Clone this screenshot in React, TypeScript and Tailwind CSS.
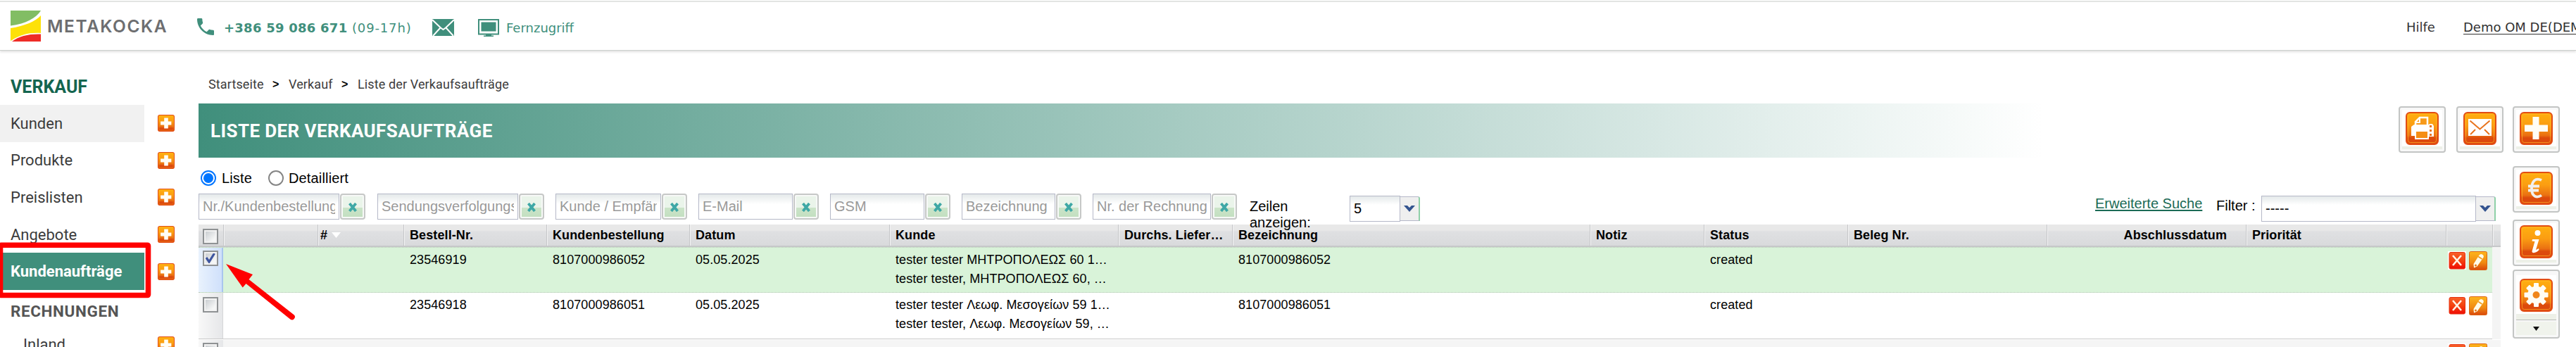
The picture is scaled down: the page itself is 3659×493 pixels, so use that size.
import React from "react";

const GRID =
  "grid grid-cols-[35px_134px_122px_203px_203px_284px_325px_162px_508px_162px_204px_283px_283px_284px_66px_12px]";

function Tile({ size, id, children }: { size: number; id: string; children: React.ReactNode }) {
  return (
    <svg width={size} height={size} viewBox="0 0 47 47" className="block shrink-0">
      <defs>
        <linearGradient id={id} x1="0" y1="0" x2="0" y2="1">
          <stop offset="0" stopColor="#ffb00f" />
          <stop offset="0.4" stopColor="#fb9d12" />
          <stop offset="0.72" stopColor="#ea7012" />
          <stop offset="0.8" stopColor="#dc4a0c" />
          <stop offset="1" stopColor="#dd4a0e" />
        </linearGradient>
      </defs>
      <rect x="1" y="1" width="45" height="45" rx="5" fill={`url(#${id})`} stroke="#e24d15" strokeWidth="2" />
      <rect x="3.5" y="3.5" width="40" height="40" rx="3" fill="none" stroke="#ffb52a" strokeOpacity="0.65" />
      {children}
    </svg>
  );
}

function ToolButton({ children }: { children: React.ReactNode }) {
  return (
    <div className="flex h-[66px] w-[67px] shrink-0 flex-col rounded-[4px] border-2 border-[#c3c5c4] bg-[#f8f8f8] p-[3px]">
      <div className="flex flex-1 justify-center bg-white pt-[3px]">{children}</div>
      <div className="h-[4px] bg-[#edf0e8]" />
    </div>
  );
}

function PlusGlyph() {
  return <path d="M18.500 7h9v11.500H40v9.500H27.500V39h-9V28H7v-9.500h11.500z" fill="#fffdf5" />;
}

function MenuItem({ label, id, hovered, active }: { label: string; id: string; hovered?: boolean; active?: boolean }) {
  const tone = active ? "bg-[#408f7c] font-bold text-white" : hovered ? "bg-[#f1f1f1] text-[#3c3c3c]" : "text-[#3c3c3c]";
  return (
    <div className="flex h-[52.6px] shrink-0 items-center">
      <div className={`flex h-full w-[205px] items-center pl-[15px] text-[22px] ${tone}`}>{label}</div>
      <div className="ml-[19px]">
        <Tile size={24} id={id}>
          <path d="M18 9h11v9.500H38v10H29V38H18v-9.500H8v-10h10z" fill="#fffdf5" />
        </Tile>
      </div>
    </div>
  );
}

function SearchField({ label, width, gap }: { label: string; width: string; gap: string }) {
  return (
    <div className={`flex h-[37px] shrink-0 ${gap}`}>
      <div
        className={`h-full overflow-hidden whitespace-nowrap border border-[#b5b8c8] bg-[linear-gradient(#e4e9ea,#ffffff_14px)] px-[5px] text-[20px] leading-[35px] text-[#999999] ${width}`}
      >
        <div className="overflow-hidden">{label}</div>
      </div>
      <div className="ml-px flex h-full w-[36px] items-center justify-center rounded-[4px] border-2 border-[#c6c8c7] bg-[#f7f9f7] p-[2px]">
        <div className="flex h-full w-full items-center justify-center bg-[linear-gradient(#eaf4ea_55%,#cbe4c8_56%,#c3dfc1)] pt-[2px]">
          <svg width="14" height="13" viewBox="0 0 14 13">
            <path d="M2.500 1l9 11M11.500 1l-9 11" stroke="#3fa8a6" strokeWidth="3.800" />
          </svg>
        </div>
      </div>
    </div>
  );
}

function Select({ value, width, trigger }: { value: string; width: string; trigger: string }) {
  return (
    <div className="mt-[3px] flex h-[37px] shrink-0">
      <div className={`h-full border border-[#b5b8c8] bg-[linear-gradient(#e4e9ea,#ffffff_12px)] pl-[5px] text-[20px] leading-[35px] text-black ${width}`}>
        {value}
      </div>
      <div
        className={`mt-px flex h-[35px] items-center justify-center rounded-tr-[3px] border-t border-b border-r-2 border-[#b5b8c8] border-r-[#8fd0a8] bg-[#efefef] ${trigger}`}
      >
        <svg width="16" height="9" viewBox="0 0 16 9">
          <path d="M0 0h5l3 3 3-3h5L8 9z" fill="#33538f" />
        </svg>
      </div>
    </div>
  );
}

function Check({ checked }: { checked?: boolean }) {
  return (
    <div className="flex h-[22px] w-[22px] items-center justify-center border-2 border-[#8f9294] bg-[linear-gradient(135deg,#c2c6ca,#f6f7f7_75%)] outline-2 -outline-offset-4 outline-[#f2f2f2]">
      {checked && (
        <svg width="16" height="16" viewBox="0 0 16 16" className="overflow-visible">
          <path d="M2 7l4 6L13.500 1" fill="none" stroke="#3f569f" strokeWidth="3.200" />
        </svg>
      )}
    </div>
  );
}

const HEADS = ["", "#", "Bestell-Nr.", "Kundenbestellung", "Datum", "Kunde", "Durchs. Liefer…", "Bezeichnung", "Notiz", "Status", "Beleg Nr.", "Abschlussdatum", "Priorität", "", ""];

function HeadCell({ label }: { label: string }) {
  const sort = label === "#";
  const right = label === "Abschlussdatum";
  const pad = right ? "justify-end pr-[27px]" : sort ? "pl-[3px]" : "pl-[8px]";
  return (
    <div className={`flex items-center border-l border-[#c5c6c8] shadow-[inset_1px_0_0_#f3f3f4] ${pad}`}>
      {label}
      {sort && (
        <svg width="13" height="8" viewBox="0 0 13 8" className="ml-[6px]">
          <path d="M0 0h13L6.500 8z" fill="#fff" />
        </svg>
      )}
    </div>
  );
}

function RowActions({ id }: { id: string }) {
  return (
    <div className="flex items-start gap-[4px] pl-[3px] pt-[5px]">
      <svg width="26" height="26" viewBox="0 0 26 26" className="block">
        <defs>
          <linearGradient id={`${id}r`} x1="0" y1="0" x2="0" y2="1">
            <stop offset="0" stopColor="#f8602a" />
            <stop offset="0.5" stopColor="#f4420e" />
            <stop offset="1" stopColor="#f00c05" />
          </linearGradient>
        </defs>
        <rect width="26" height="26" fill="#fff" />
        <rect x="2" y="1.500" width="22.500" height="23.500" rx="2" fill={`url(#${id}r)`} stroke="#e5300f" />
        <path d="M7 6l12 14M19 6L7 20" stroke="#fff3e6" strokeWidth="2.600" />
      </svg>
      <svg width="26" height="27" viewBox="0 0 26 27" className="block">
        <defs>
          <linearGradient id={`${id}p`} x1="0" y1="0" x2="0" y2="1">
            <stop offset="0" stopColor="#fdb51c" />
            <stop offset="0.6" stopColor="#f08a12" />
            <stop offset="1" stopColor="#d9480c" />
          </linearGradient>
        </defs>
        <rect x="0.500" y="0.500" width="25" height="26" rx="2" fill={`url(#${id}p)`} stroke="#dd6414" />
        <path d="M14.500 5.500a3.200 3.200 0 0 1 5.500 4L11.500 21.500 7 23.500l-.500-5.500z" fill="#fffbe8" />
        <path d="M13.200 7.500l5.300 3.500" stroke="#ef9a1c" strokeWidth="1.600" />
        <circle cx="9.500" cy="20" r="1.500" fill="#e57716" />
      </svg>
    </div>
  );
}

type Order = { nr: string; order: string; lines: [string, string] };

const ORDERS: Order[] = [
  { nr: "23546919", order: "8107000986052", lines: ["tester tester ΜΗΤΡΟΠΟΛΕΩΣ 60 1…", "tester tester, ΜΗΤΡΟΠΟΛΕΩΣ 60, …"] },
  { nr: "23546918", order: "8107000986051", lines: ["tester tester Λεωφ. Μεσογείων 59 1…", "tester tester, Λεωφ. Μεσογείων 59, …"] },
];

function OrderRow({ order, selected }: { order: Order; selected?: boolean }) {
  const row = selected ? "h-[65px] border-y border-dotted border-[#b9c9b9] bg-[#d9f3d9]" : "h-[66px] border-b-[1px] border-[#c9c9c9] bg-white";
  const check = selected
    ? "bg-[linear-gradient(90deg,#e9f2fd,#cfe0fb)] border-r-2 border-[#a9c5ee]"
    : "bg-[linear-gradient(90deg,#f8f8f8,#e6e7e9)] border-r border-[#d5d6d8]";
  return (
    <div className={`${GRID} ${row} whitespace-nowrap text-[18px] leading-[27px] tracking-[0.080px] text-black`}>
      <div className={`pl-[6px] ${selected ? "pt-[4px]" : "pt-[6px]"} ${check}`}>
        <Check checked={selected} />
      </div>
      <div />
      <div />
      <div className="pl-[9px] pt-[4px]">{order.nr}</div>
      <div className="pl-[9px] pt-[4px]">{order.order}</div>
      <div className="pl-[9px] pt-[4px]">05.05.2025</div>
      <div className="pl-[9px] pt-[4px]">
        <div>{order.lines[0]}</div>
        <div>{order.lines[1]}</div>
      </div>
      <div />
      <div className="pl-[9px] pt-[4px]">{order.order}</div>
      <div />
      <div className="pl-[9px] pt-[4px]">created</div>
      <div />
      <div />
      <div />
      <RowActions id={`o${order.nr}`} />
      <div className="-mt-px -mb-px bg-[#f4f4f4]" />
    </div>
  );
}

function Header() {
  return (
    <header className="flex h-[72px] w-full shrink-0 items-start whitespace-nowrap border-b border-[#ccd0cd] bg-white font-['DejaVu_Sans',sans-serif] text-[18px] leading-[24px] shadow-[0_2px_3px_rgba(0,0,0,0.12)]">
      <svg width="43" height="44" viewBox="0 0 43 44" className="ml-[15px] mt-[15px] shrink-0">
        <path d="M0 0h43C37 10 22 19 0 21.500z" fill="#82bd64" />
        <path d="M0 25C20 22 36 15 43 7v25C28 31 14 34 2 42l-2 1z" fill="#fde109" />
        <path d="M2 44C12 36 26 33 43 33.500V44z" fill="#ee2c27" />
      </svg>
      <div className="ml-[9px] mt-[22px] w-[171px] shrink-0 font-[Inter,sans-serif] text-[24.500px] font-semibold leading-[30px] tracking-[1.500px] text-[#6d6e70]">
        METAKOCKA
      </div>
      <svg width="24" height="24" viewBox="3 3 18 18" className="ml-[42px] mt-[26px] shrink-0">
        <path
          d="M6.620 10.790c1.440 2.830 3.760 5.140 6.590 6.590l2.200-2.200c.270-.270.670-.360 1.020-.240 1.120.370 2.330.570 3.570.570.550 0 1 .450 1 1V20c0 .550-.450 1-1 1-9.390 0-17-7.610-17-17 0-.550.450-1 1-1h3.500c.550 0 1 .450 1 1 0 1.250.200 2.450.570 3.570.110.350.030.740-.250 1.020l-2.200 2.200z"
          fill="#408f7c"
        />
      </svg>
      <div className="ml-[14px] mt-[28px] w-[296px] text-[#408f7c]">
        <span className="font-bold tracking-[0.250px]">+386 59 086 671</span>
        <span className="tracking-[0.850px]"> (09-17h)</span>
      </div>
      <svg width="31" height="24" viewBox="0 0 31 24" className="mt-[27px] shrink-0">
        <rect width="31" height="24" fill="#408f7c" />
        <path d="M0 1l12 11.500 3.500 2.500 3.500-2.500L31 1M1 24l10.500-11.500M30 24L19.500 12.500" fill="none" stroke="#fff" strokeWidth="2" />
      </svg>
      <svg width="30" height="26" viewBox="0 0 30 26" className="ml-[34px] mt-[27px] shrink-0">
        <path d="M1 1h28v20.500H1z" fill="#fff" stroke="#408f7c" strokeWidth="2" />
        <path d="M4.500 4.500h21v13h-21zM11 22h8v1.500h3V25H8v-1.500h3z" fill="#408f7c" />
      </svg>
      <div className="ml-[10px] mt-[28px] text-[#408f7c]">Fernzugriff</div>
      <div className="ml-auto mt-[27px] w-[81px] text-[#333]">Hilfe</div>
      <div className="mt-[27px] w-[160px] shrink-0 overflow-visible text-[#333] underline underline-offset-[3px]">Demo OM DE(DEMO)</div>
    </header>
  );
}

export default function App() {
  return (
    <div className="relative flex h-[493px] w-[3659px] flex-col overflow-hidden bg-white font-['Liberation_Sans',Arial,sans-serif]">
      <div className="absolute left-0 top-px z-10 h-[2px] w-full bg-[#e2e4e2]" />
      <Header />
      <div className="flex min-h-0 flex-1">
        <aside className="flex w-[282px] shrink-0 flex-col font-[Roboto,sans-serif]">
          <div className="h-[77px] shrink-0 pl-[15px] pt-[37px] text-[25px] font-bold leading-[30px] text-[#14654f]">VERKAUF</div>
          <MenuItem label="Kunden" id="m1" hovered />
          <MenuItem label="Produkte" id="m2" />
          <MenuItem label="Preislisten" id="m3" />
          <MenuItem label="Angebote" id="m4" />
          <MenuItem label="Kundenaufträge" id="m5" active />
          <div className="flex h-[62px] shrink-0 items-center pl-[15px] text-[22.500px] font-bold tracking-[0.600px] text-[#555]">RECHNUNGEN</div>
          <div className="flex h-[32px] shrink-0 items-center">
            <div className="w-[224px] pl-[33px] text-[22px] text-[#3c3c3c]">Inland</div>
            <Tile size={24} id="m6">
              <path d="M18 9h11v9.500H38v10H29V38H18v-9.500H8v-10h10z" fill="#fffdf5" />
            </Tile>
          </div>
        </aside>

        <main className="w-[3287px] shrink-0">
          <nav className="flex h-[75px] items-center pl-[14px] pt-[20px] font-[Roboto,sans-serif] text-[18px] tracking-[0.120px] text-[#3c3c3c]">
            <span className="w-[91px]">Startseite</span>
            <span className="w-[23px] font-['Liberation_Sans'] text-[16px] font-bold text-black">&gt;</span>
            <span className="w-[75px]">Verkauf</span>
            <span className="w-[23px] font-['Liberation_Sans'] text-[16px] font-bold text-black">&gt;</span>
            <span>Liste der Verkaufsaufträge</span>
          </nav>

          <div className="flex h-[77px]">
            <h1 className="flex w-[3125px] items-center bg-[linear-gradient(90deg,#408f7c,#ffffff_2620px)] pl-[17px] pt-[2px] font-[Roboto,sans-serif] text-[26px] font-bold tracking-[0.400px] text-white">
              LISTE DER VERKAUFSAUFTRÄGE
            </h1>
            <div className="mt-[4px] flex gap-[15px]">
              <ToolButton>
                <Tile size={47} id="t1">
                  <path d="M14 19v-5l6-6h11v11" fill="#f79a1a" stroke="#fff" strokeWidth="2.500" />
                  <path d="M14 15h6V8" fill="none" stroke="#fff" strokeWidth="2" />
                  <path d="M8 21l4-3h21l1-1h4l2 3v15h-7v4H13v-5H8z" fill="#fff" />
                  <rect x="15" y="28" width="16" height="9" fill="#f58e14" />
                  <path d="M35.500 19v3M35.500 25v3M35.500 31v3" stroke="#e8731c" strokeWidth="3" />
                </Tile>
              </ToolButton>
              <ToolButton>
                <Tile size={47} id="t2">
                  <rect x="7" y="10" width="33" height="24" fill="#fff" />
                  <path d="M9.500 12.500l14 12 14-12M10 32l7-7M37 32l-7-7" fill="none" stroke="#e8731c" strokeWidth="2" />
                </Tile>
              </ToolButton>
            </div>
          </div>

          <div className="flex h-[51px] items-center pl-[3px] pt-[7px] text-[20px] tracking-[0.150px] text-black">
            <div className="flex h-[22px] w-[22px] items-center justify-center rounded-full border-2 border-[#0075ff]">
              <div className="h-[14px] w-[14px] rounded-full bg-[#0075ff]" />
            </div>
            <span className="ml-[8px] w-[66px]">Liste</span>
            <div className="h-[22px] w-[22px] rounded-full border-2 border-[#858585]" />
            <span className="ml-[7px]">Detailliert</span>
          </div>

          <div className="relative z-10 flex h-[44px] items-start text-[20px]">
            <SearchField label="Nr./Kundenbestellung" width="w-[200px]" gap="mr-[17px]" />
            <SearchField label="Sendungsverfolgungsnummer" width="w-[200px]" gap="mr-[16px]" />
            <SearchField label="Kunde / Empfänger" width="w-[150px]" gap="mr-[16px]" />
            <SearchField label="E-Mail" width="w-[134px]" gap="mr-[16px]" />
            <SearchField label="GSM" width="w-[134px]" gap="mr-[16px]" />
            <SearchField label="Bezeichnung" width="w-[133px]" gap="mr-[16px]" />
            <SearchField label="Nr. der Rechnung" width="w-[168px]" gap="mr-[18px]" />
            <div className="mt-[7px] w-[142px] pr-[40px] leading-[23px] text-black">Zeilen anzeigen:</div>
            <Select value="5" width="w-[72px]" trigger="w-[28px]" />
            <a className="ml-[959px] mt-[3px] w-[172px] leading-[23px] text-[#1b6b56] underline decoration-2 underline-offset-[2px]">Erweiterte Suche</a>
            <span className="mt-[6px] w-[64px] leading-[23px] text-black">Filter :</span>
            <Select value="-----" width="w-[305px]" trigger="w-[28px]" />
          </div>

          <div className="w-[3270px]">
            <div
              className={`${GRID} h-[32px] border-b-2 border-[#c6c7c9] bg-[linear-gradient(#e8e8e8_8px,#dfe0e2_10px,#d9dadc)] text-[18px] font-bold tracking-[0.100px] text-black`}
            >
              <div className="pl-[6px] pt-[6px]">
                <Check />
              </div>
              {HEADS.map((h, i) => (
                <HeadCell key={i} label={h} />
              ))}
            </div>
            <OrderRow order={ORDERS[0]} selected />
            <OrderRow order={ORDERS[1]} />
            <div className={`${GRID} h-[66px] border-t border-white bg-[#f5f5f5]`}>
              <div className="bg-[linear-gradient(90deg,#f8f8f8,#e6e7e9)] pl-[6px] pt-[4px]">
                <Check />
              </div>
              <div className="col-span-13" />
              <RowActions id="o3" />
            </div>
          </div>
        </main>

        <div className="flex flex-col pt-[79px]">
          <ToolButton>
            <Tile size={47} id="t3">
              <PlusGlyph />
            </Tile>
          </ToolButton>
          <div className="h-[19px] shrink-0" />
          <ToolButton>
            <Tile size={47} id="t4">
              <path d="M31 12c-8-4-14 1-14 12s7 14 14 9.500M12 20.500h16M12 26.500h15" fill="none" stroke="#f1efee" strokeWidth="3.800" />
            </Tile>
          </ToolButton>
          <div className="h-[10px] shrink-0" />
          <ToolButton>
            <Tile size={47} id="t5">
              <circle cx="25.500" cy="11" r="4" fill="#fff" />
              <path d="M18 20h9.500L23 35l4-2 .500 2c-3 4-10 6-10 2l4-14-4-.500z" fill="#fff" />
            </Tile>
          </ToolButton>
          <div className="h-[5px] shrink-0" />
          <div className="flex h-[98px] w-[67px] shrink-0 flex-col rounded-[4px] border-2 border-[#c3c5c4] bg-[#f8f8f8] p-[3px]">
            <div className="mt-[3px] flex h-[55px] shrink-0 justify-center bg-white pt-[5px]">
              <Tile size={47} id="t6">
                <g fill="#fffdf5" transform="translate(23.500 23)">
                  <rect x="-3.500" y="-17" width="7" height="34" rx="1" />
                  <rect x="-3.500" y="-17" width="7" height="34" rx="1" transform="rotate(45)" />
                  <rect x="-3.500" y="-17" width="7" height="34" rx="1" transform="rotate(90)" />
                  <rect x="-3.500" y="-17" width="7" height="34" rx="1" transform="rotate(135)" />
                  <circle r="12.500" />
                </g>
                <circle cx="23.500" cy="23" r="5" fill="#f0861a" />
              </Tile>
            </div>
            <div className="h-[9px] shrink-0 border-b border-[#b9bbb9] bg-[#edf0e8]" />
            <div className="mt-[2px] flex flex-1 items-center justify-center bg-[#f0f3ec]">
              <svg width="9" height="6" viewBox="0 0 9 6">
                <path d="M0 0h9L4.500 6z" fill="#111" />
              </svg>
            </div>
          </div>
        </div>
      </div>

      <svg width="430" height="493" viewBox="0 0 430 493" className="pointer-events-none absolute left-0 top-0 z-20">
        <rect x="0.500" y="348.200" width="210" height="71.300" rx="1" fill="none" stroke="#ff0000" strokeWidth="7.600" strokeLinejoin="round" />
        <path d="M321 375l38 15-5.500 7 63.700 50a4 4 0 0 1-5 6.500L349.500 403l-4.800 5.500z" fill="#ff0000" />
      </svg>
    </div>
  );
}
